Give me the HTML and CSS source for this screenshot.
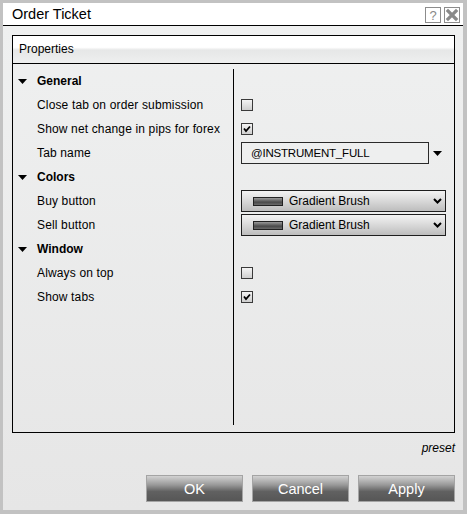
FILE: index.html
```html
<!DOCTYPE html>
<html>
<head>
<meta charset="utf-8">
<link rel="stylesheet" href="styles.css">
</head>
<body>
<div class="window">
  <div class="titlebar">
    <span class="title">Order Ticket</span>
    <div class="tbtns">
      <span class="tbtn help">?</span>
      <span class="tbtn close"><svg width="14" height="14" viewBox="0 0 14 14"><path d="M3 3 L11 11 M11 3 L3 11" stroke="#8a8a8a" stroke-width="3.2" stroke-linecap="square"/></svg></span>
    </div>
  </div>
  <div class="content">
    <div class="panel">
      <div class="panel-head">Properties</div>
      <div class="grid">
        <div class="names">
          <div class="row cat"><svg class="tri" width="9" height="5" viewBox="0 0 9 5"><path d="M0 0 H9 L4.5 5 Z" fill="#000"/></svg>General</div>
          <div class="row item">Close tab on order submission</div>
          <div class="row item">Show net change in pips for forex</div>
          <div class="row item">Tab name</div>
          <div class="row cat"><svg class="tri" width="9" height="5" viewBox="0 0 9 5"><path d="M0 0 H9 L4.5 5 Z" fill="#000"/></svg>Colors</div>
          <div class="row item">Buy button</div>
          <div class="row item">Sell button</div>
          <div class="row cat"><svg class="tri" width="9" height="5" viewBox="0 0 9 5"><path d="M0 0 H9 L4.5 5 Z" fill="#000"/></svg>Window</div>
          <div class="row item">Always on top</div>
          <div class="row item">Show tabs</div>
        </div>
        <div class="values">
          <div class="row"></div>
          <div class="row"><span class="cb"></span></div>
          <div class="row"><span class="cb"><svg width="10" height="10" viewBox="0 0 10 10"><path d="M2 4.5 L4 7 L8 2.5" fill="none" stroke="#000" stroke-width="1.8"/></svg></span></div>
          <div class="row">
            <span class="input">@INSTRUMENT_FULL</span>
            <svg class="ddtri" width="9" height="5" viewBox="0 0 9 5"><path d="M0 0 H9 L4.5 5 Z" fill="#000"/></svg>
          </div>
          <div class="row"></div>
          <div class="row">
            <span class="select"><span class="swatch"></span><span class="sel-text">Gradient Brush</span><svg class="chev" width="9" height="6" viewBox="0 0 9 6"><path d="M1 1 L4.5 4.5 L8 1" fill="none" stroke="#000" stroke-width="2"/></svg></span>
          </div>
          <div class="row">
            <span class="select"><span class="swatch"></span><span class="sel-text">Gradient Brush</span><svg class="chev" width="9" height="6" viewBox="0 0 9 6"><path d="M1 1 L4.5 4.5 L8 1" fill="none" stroke="#000" stroke-width="2"/></svg></span>
          </div>
          <div class="row"></div>
          <div class="row"><span class="cb"></span></div>
          <div class="row"><span class="cb"><svg width="10" height="10" viewBox="0 0 10 10"><path d="M2 4.5 L4 7 L8 2.5" fill="none" stroke="#000" stroke-width="1.8"/></svg></span></div>
        </div>
      </div>
    </div>
    <div class="preset">preset</div>
    <div class="actions">
      <button class="btn">OK</button>
      <button class="btn">Cancel</button>
      <button class="btn">Apply</button>
    </div>
  </div>
</div>
</body>
</html>
```

FILE: styles.css
```css
* { box-sizing: border-box; }
html, body { margin: 0; padding: 0; }
body {
  font-family: "Liberation Sans", Arial, sans-serif;
  font-size: 12px;
  color: #000;
  background: #fff;
}
.window {
  width: 467px;
  height: 514px;
  border-style: solid;
  border-color: #c2c2c2;
  border-width: 3px 4px 4px 3px;
  display: flex;
  flex-direction: column;
}
.titlebar {
  height: 23px;
  background: #fff;
  border-bottom: 1px solid #000;
  display: flex;
  align-items: center;
  justify-content: space-between;
  padding: 0 3px 1px 9px;
}
.title {
  font-size: 14.5px;
  color: #000;
}
.tbtns {
  display: flex;
  gap: 3px;
  align-self: flex-start;
  margin-top: 4px;
}
.tbtn {
  width: 16px;
  height: 16px;
  border: 1px solid #8c8c8c;
  background: #fff;
  display: flex;
  align-items: center;
  justify-content: center;
  color: #888;
  font-size: 13px;
  line-height: 1;
}
.content {
  flex: 1;
  background: linear-gradient(#eff0f0, #e6e6e6);
  padding: 9px 8px 0 9px;
  display: flex;
  flex-direction: column;
}
.panel {
  height: 398px;
  border: 1px solid #000;
  display: flex;
  flex-direction: column;
}
.panel-head {
  height: 28px;
  border-bottom: 1px solid #000;
  background: linear-gradient(#ffffff 0%, #ffffff 42%, #e6e7e7 52%, #eeefef 100%);
  padding-left: 6px;
  display: flex;
  align-items: center;
  padding-bottom: 2px;
}
.grid {
  display: flex;
  margin: 5px 0 7px 0;
  flex: 1;
}
.names {
  width: 221px;
  border-right: 1px solid #000;
}
.values {
  flex: 1;
  padding-left: 7px;
}
.row {
  height: 24px;
  display: flex;
  align-items: center;
}
.cat {
  font-weight: bold;
  padding-left: 5px;
}
.tri { margin-right: 10px; }
.item {
  padding-left: 24px;
  letter-spacing: 0.15px;
}
.cb {
  width: 12px;
  height: 12px;
  border: 1px solid #3a3a3a;
  background: linear-gradient(#f4f4f4, #cfcfcf);
  display: flex;
  align-items: center;
  justify-content: center;
}
.input {
  width: 188px;
  height: 22px;
  border: 1px solid #2a2a2a;
  background: #eeefef;
  padding-left: 9px;
  display: flex;
  align-items: center;
  font-size: 11.5px;
  letter-spacing: -0.2px;
}
.ddtri { margin-left: 4px; }
.select {
  width: 205px;
  height: 22px;
  border: 1px solid #1e1e1e;
  background: linear-gradient(#f2f2f2, #dedede 40%, #bdbdbd);
  display: flex;
  align-items: center;
  padding-left: 11px;
}
.swatch {
  width: 30px;
  height: 9px;
  border: 1px solid #222;
  background: linear-gradient(#9a9a9a, #4a4a4a 60%, #6a6a6a);
  margin-right: 6px;
}
.sel-text { flex: 1; }
.chev { margin-right: 3px; }
.preset {
  margin-top: 8px;
  height: 14px;
  line-height: 14px;
  text-align: right;
  font-style: italic;
}
.actions {
  margin-top: 20px;
  display: flex;
  justify-content: flex-end;
  gap: 9px;
}
.btn {
  width: 97px;
  height: 27px;
  border: 1px solid #a4a4a4;
  background: linear-gradient(#d2d2d2 0%, #9a9a9a 35%, #616161 62%, #565656 100%);
  color: #fff;
  font-family: "Liberation Sans", Arial, sans-serif;
  font-size: 14.5px;
  padding: 0;
  margin: 0;
}
```
